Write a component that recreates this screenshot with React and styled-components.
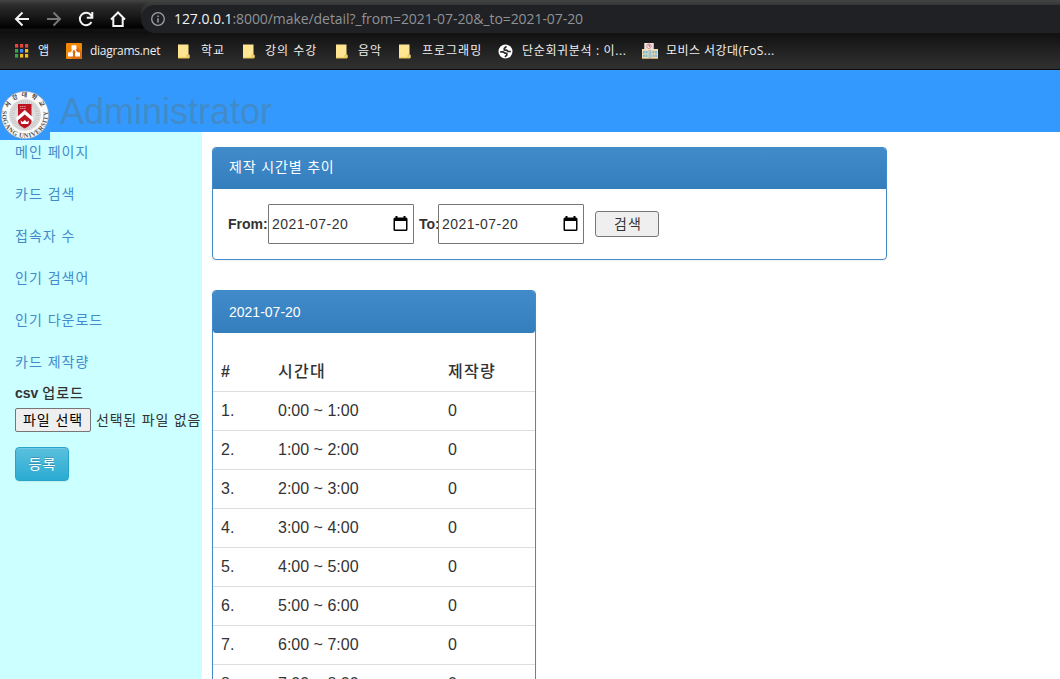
import React from 'react';
import styled, { createGlobalStyle } from 'styled-components';

const GlobalStyle = createGlobalStyle`
  *, *::before, *::after { box-sizing: border-box; }
  html, body { margin: 0; padding: 0; height: 100%; overflow: hidden; }
  body {
    font-family: "Liberation Sans", "Noto Sans CJK KR", sans-serif;
    font-size: 14px;
    line-height: 20px;
    color: #333;
    background: #fff;
  }
`;

const Screen = styled.div`
  width: 1060px;
  height: 679px;
  display: flex;
  flex-direction: column;
  overflow: hidden;
`;

const Chrome = styled.div`
  height: 70px;
  flex: none;
  display: flex;
  flex-direction: column;
  font-family: "Open Sans", "Noto Sans CJK KR", sans-serif;
  background: #2d2d2d;
  border-bottom: 1px solid #0c0c0c;
`;

const Toolbar = styled.div`
  height: 33px;
  flex: none;
  display: flex;
  align-items: flex-end;
  background: linear-gradient(#434443 0, #2c2c2c 5px, #1b1b1b 15px, #030303 27px, #000 28px, #131313 29px, #0e0e0e 33px);
`;

const NavButtons = styled.div`
  width: 141px;
  height: 28px;
  padding-left: 14px;
  display: flex;
  align-items: center;
  gap: 16px;
`;

const AddressBar = styled.div`
  flex: 1;
  height: 28px;
  padding-left: 9px;
  display: flex;
  align-items: center;
  gap: 8px;
  border-radius: 14px 0 0 14px;
  background: #202124;
  box-shadow: 0 -5px 0 rgba(70, 72, 70, 0.35);
`;

const Url = styled.span`
  font-size: 14px;
  letter-spacing: -0.07px;
  color: #8f9296;
  white-space: nowrap;
  b { font-weight: 400; color: #f1f3f4; }
`;

const BookmarkBar = styled.div`
  flex: 1;
  padding-left: 14px;
  display: flex;
  align-items: center;
  background: linear-gradient(#111 0, #1e1e1e 14px, #2e2e2e 32px, #2e2e2e 100%);
`;

const Bookmark = styled.div`
  width: ${(p) => p.$width}px;
  flex: none;
  display: flex;
  align-items: center;
  gap: ${(p) => p.$gap ?? 8}px;
  font-size: 12px;
  line-height: 18px;
  letter-spacing: ${(p) => p.$spacing ?? 1}px;
  color: #eee;
  white-space: nowrap;
  svg { flex: none; }
`;

const Header = styled.header`
  height: 62px;
  flex: none;
  display: flex;
  align-items: flex-start;
  background: #3399ff;
`;

const LogoBox = styled.div`
  position: relative;
  z-index: 1;
  width: 50px;
  height: 50px;
  margin-top: 20px;
  flex: none;
  background: #3399ff;
  svg { display: block; }
`;

const Title = styled.h1`
  margin: 22px 0 0 10px;
  font-size: 36px;
  line-height: 40px;
  font-weight: 400;
  color: #428bca;
`;

const Main = styled.div`
  flex: 1;
  min-height: 0;
  display: flex;
`;

const Sidebar = styled.nav`
  width: 202px;
  flex: none;
  padding: 0 0 0 15px;
  background: #ccffff;
`;

const NavLink = styled.a`
  display: block;
  height: 42px;
  padding-top: 10px;
  letter-spacing: 1px;
  color: #428bca;
`;

const LinkList = styled.div`
  height: 251px;
`;

const UploadLabel = styled.div`
  height: 20px;
  font-weight: 700;
  span { font-weight: 500; letter-spacing: 1px; }
`;

const FileField = styled.div`
  margin-top: 5px;
  display: flex;
  align-items: center;
  gap: 5px;
  white-space: nowrap;
  letter-spacing: 0.8px;
`;

const FileButton = styled.button`
  width: 76px;
  height: 24px;
  padding: 0;
  flex: none;
  border: 1px solid #767676;
  border-radius: 2px;
  background: #efefef;
  font: inherit;
  line-height: 20px;
  letter-spacing: 0.9px;
  color: #000;
`;

const SubmitButton = styled.button`
  display: block;
  width: 54px;
  height: 34px;
  margin-top: 15px;
  padding: 0 0 0 1px;
  border: 1px solid #28a4c9;
  border-radius: 4px;
  background: linear-gradient(#5bc0de, #2aabd2);
  box-shadow: inset 0 1px 0 rgba(255, 255, 255, 0.15), 0 1px 1px rgba(0, 0, 0, 0.075);
  font: inherit;
  letter-spacing: 1px;
  color: #fff;
  text-shadow: 0 -1px 0 rgba(0, 0, 0, 0.2);
`;

const Content = styled.main`
  flex: 1;
  padding: 15px 0 0 10px;
  display: flex;
  flex-direction: column;
  gap: 30px;
`;

const Panel = styled.section`
  width: ${(p) => p.$width}px;
  flex: none;
  border: 1px solid #428bca;
  border-radius: 4px;
  background: #fff;
  box-shadow: 0 1px 2px rgba(0, 0, 0, 0.05);
`;

const PanelHeading = styled.div`
  height: ${(p) => p.$height}px;
  padding: ${(p) => p.$top}px 16px 0;
  border-radius: ${(p) => (p.$rounded ? '3px' : '3px 3px 0 0')};
  background: linear-gradient(#428bca, #357ebd);
  color: #fff;
  letter-spacing: ${(p) => p.$spacing || 0}px;
`;

const FilterRow = styled.div`
  height: 70px;
  padding-left: 15px;
  display: flex;
  align-items: center;
`;

const FieldLabel = styled.label`
  width: ${(p) => p.$width}px;
  font-weight: 700;
`;

const DateField = styled.div`
  width: 146px;
  height: 40px;
  margin-right: 5px;
  padding: 0 5px 0 3px;
  display: flex;
  align-items: center;
  justify-content: space-between;
  border: 1px solid #767676;
  border-radius: 1px;
  letter-spacing: 0.45px;
`;

const SearchButton = styled.button`
  width: 64px;
  height: 26px;
  margin-left: 6px;
  padding: 0 0 0 2px;
  border: 1px solid #767676;
  border-radius: 3px;
  background: #efefef;
  font: inherit;
  letter-spacing: 1px;
  color: #333;
`;

const Table = styled.div`
  padding-top: 19px;
  font-size: 16px;
`;

const TableRow = styled.div`
  height: 39px;
  padding: 0 0 1px 8px;
  display: grid;
  grid-template-columns: 57px 170px 1fr;
  align-items: center;
  border-top: 1px solid ${(p) => (p.$head ? 'transparent' : '#ddd')};
  font-weight: ${(p) => (p.$head ? 700 : 400)};
  letter-spacing: ${(p) => (p.$head ? '1.3px' : '0')};
`;

const HangulHead = styled.span`
  font-weight: 500;
`;

const NavIcon = ({ d, color = '#f4f4f4' }) => (
  <svg width="16" height="16" viewBox="0 0 16 16" fill="none" stroke={color} strokeWidth="2">
    <path d={d} />
  </svg>
);

const AppsIcon = () => {
  const colors = ['#e8453c', '#e8453c', '#e8453c', '#35a552', '#4285f4', '#f5b722', '#35a552', '#f5b722', '#f5b722'];
  return (
    <svg width="15" height="16" viewBox="0 0 15 16">
      {colors.map((c, i) => (
        <rect key={i} x={1 + (i % 3) * 5} y={1 + Math.floor(i / 3) * 5} width="3.2" height="3.6" fill={c} />
      ))}
    </svg>
  );
};

const DiagramIcon = () => (
  <svg width="16" height="16" viewBox="0 0 16 16">
    <rect width="16" height="16" rx="1" fill="#f08705" />
    <path d="M10 3 16 9v7H7l-4-3z" fill="#df6c0c" />
    <path d="M8 5 4.500 11M8 5l3.500 6" stroke="#fff" strokeWidth="1.400" />
    <rect x="5.500" y="2.300" width="5" height="4.200" rx=".6" fill="#fff" />
    <rect x="2" y="9.300" width="5" height="4.200" rx=".6" fill="#fff" />
    <rect x="9" y="9.300" width="5" height="4.200" rx=".6" fill="#fff" />
  </svg>
);

const FolderIcon = () => (
  <svg width="13" height="15" viewBox="0 0 13 15">
    <path d="M1 .5h10.500v10.200H12.500V14H1z" fill="#ffe591" />
    <path d="M1 14h11v-3h-2v3" fill="none" stroke="#e5bd4d" />
  </svg>
);

const GlobeIcon = () => (
  <svg width="15" height="15" viewBox="0 0 15 15">
    <circle cx="7.500" cy="7.500" r="7" fill="#fff" />
    <path d="M2.200 7.800h2.600c1 0 1.300 1.200 2.300 1.300l1.700.3v1.700l-1.900 1.700" fill="none" stroke="#292929" strokeWidth="1.700" />
    <path d="M12.800 7.500h-2.300c-1 0-1.200-1.200-2.200-1.300l-2-.2V4.400L8.500 2.400" fill="none" stroke="#292929" strokeWidth="1.700" />
  </svg>
);

const BuildingIcon = () => (
  <svg width="16" height="16" viewBox="0 0 16 16">
    <path d="M2.500 0h9v6H16v10H0V6h2.500z" fill="#efdcae" />
    <path d="M2.500 0h9v6.500h-9z" fill="#eee3df" />
    <circle cx="7" cy="3.200" r="2.200" fill="#fff" stroke="#d4818a" />
    <path d="M7 1.500v1.800h1.300" stroke="#8a2f3c" fill="none" strokeWidth=".8" />
    <path d="M1 8h4.500v2.500H1zM1 11.500h4.500V14H1zM10.500 8H15v2.500h-4.500zM10.500 11.500H15V14h-4.500z" fill="#79b7dc" />
    <path d="M6.500 7h3v9h-3z" fill="#9fc3c9" />
    <path d="M3.200 7.500V14M12.700 8v6" stroke="#efdcae" strokeWidth=".7" />
    <path d="M0 15.500h16" stroke="#c49c6b" />
  </svg>
);

const InfoIcon = () => (
  <svg width="16" height="16" viewBox="0 0 16 16" fill="none" stroke="#9aa0a6">
    <circle cx="8" cy="8" r="6.300" strokeWidth="1.300" />
    <path d="M8 7.200v4.200M8 4.400v1.500" strokeWidth="1.500" />
  </svg>
);

const CalendarIcon = () => (
  <svg width="15" height="16" viewBox="0 0 15 16">
    <path d="M2.500 0h2v1.500h6V0h2v1.500H13a1.500 1.500 0 0 1 1.500 1.500v10.500A1.500 1.500 0 0 1 13 15H2a1.500 1.500 0 0 1-1.500-1.500V3A1.500 1.500 0 0 1 2 1.500h.5zM2 5v8.500h11V5z" fill="#000" />
  </svg>
);

const Emblem = () => (
  <svg width="50" height="50" viewBox="0 0 50 50">
    <defs>
      <path id="arc-top" d="M7 25a18 18 0 0 1 36 0" />
      <path id="arc-bottom" d="M5 14A22.800 22.800 0 1 0 45 14" />
    </defs>
    <circle cx="25" cy="25" r="23.700" fill="#fafafa" stroke="#8d9daf" strokeWidth=".6" />
    <circle cx="25" cy="25" r="15.500" fill="#dedede" stroke="#c8c8c8" strokeWidth=".5" />
    <circle cx="25" cy="25" r="12.500" fill="none" stroke="#bbb" strokeWidth="4" strokeDasharray=".6 1.300" />
    <text fontFamily="Noto Sans CJK KR, sans-serif" fontSize="6" fontWeight="700" fill="#3c3c3c" textAnchor="middle" letterSpacing="3.400">
      <textPath href="#arc-top" startOffset="52%">서강대학교</textPath>
    </text>
    <text fontFamily="Liberation Serif, serif" fontSize="6.600" fontWeight="700" fill="#555" textAnchor="middle" letterSpacing=".5">
      <textPath href="#arc-bottom" startOffset="50%">SOGANG UNIVERSITY</textPath>
    </text>
    <path d="M18 14h13.500v17c0 4-3.300 5.300-6.700 7.500-3.500-2.200-6.800-3.500-6.800-7.500z" fill="#bd1421" />
    <path d="M16.500 27.500 24.800 20l8.200 7.500v4L24.800 24.500l-8.300 7z" fill="#fff" />
    <path d="m20.500 30.500 2.200 1.500 2.100-2 2.100 2 2.200-1.500-.8 3.500h-7z" fill="#fff" />
    <path d="M20 16.500h6M20 18.500h6" stroke="#e79aa0" strokeWidth=".9" strokeDasharray="1.500 .6" />
  </svg>
);

const links = ['메인 페이지', '카드 검색', '접속자 수', '인기 검색어', '인기 다운로드', '카드 제작량'];
const hours = Array.from({ length: 8 }, (_, i) => i);

export default function App() {
  return (
    <Screen>
      <GlobalStyle />
      <Chrome>
        <Toolbar>
          <NavButtons>
            <NavIcon d="M15 8H2M8.500 1.500 2 8l6.500 6.500" />
            <NavIcon d="M1 8h13M7.500 1.500 14 8l-6.500 6.500" color="#777" />
            <NavIcon d="M13.500 11A6.200 6.200 0 1 1 13 4.200L14 6M14.300 1v5.700H8.800" />
            <NavIcon d="M1 8.500 8 1.500l7 7M3.300 7v8h9.400V7" />
          </NavButtons>
          <AddressBar>
            <InfoIcon />
            <Url><b>127.0.0.1</b>:8000/make/detail?_from=2021-07-20&amp;_to=2021-07-20</Url>
          </AddressBar>
        </Toolbar>
        <BookmarkBar>
          <Bookmark $width={52} $gap={9}><AppsIcon /><span>앱</span></Bookmark>
          <Bookmark $width={111} $spacing={-0.28}><DiagramIcon /><span>diagrams.net</span></Bookmark>
          <Bookmark $width={65} $gap={11}><FolderIcon /><span>학교</span></Bookmark>
          <Bookmark $width={93} $gap={10}><FolderIcon /><span>강의 수강</span></Bookmark>
          <Bookmark $width={63} $gap={10}><FolderIcon /><span>음악</span></Bookmark>
          <Bookmark $width={100} $gap={11}><FolderIcon /><span>프로그래밍</span></Bookmark>
          <Bookmark $width={144} $gap={9} $spacing={0.65}><GlobeIcon /><span>단순회귀분석 : 이...</span></Bookmark>
          <Bookmark $width={150} $spacing={0.45}><BuildingIcon /><span>모비스 서강대(FoS...</span></Bookmark>
        </BookmarkBar>
      </Chrome>
      <Header>
        <LogoBox><Emblem /></LogoBox>
        <Title>Administrator</Title>
      </Header>
      <Main>
        <Sidebar>
          <LinkList>
            {links.map((label) => <NavLink key={label}>{label}</NavLink>)}
          </LinkList>
          <UploadLabel>csv <span>업로드</span></UploadLabel>
          <FileField>
            <FileButton>파일 선택</FileButton>
            <span>선택된 파일 없음</span>
          </FileField>
          <SubmitButton>등록</SubmitButton>
        </Sidebar>
        <Content>
          <Panel $width={675}>
            <PanelHeading $height={41} $top={9} $spacing={0.85}>제작 시간별 추이</PanelHeading>
            <FilterRow>
              <FieldLabel $width={40}>From:</FieldLabel>
              <DateField>2021-07-20<CalendarIcon /></DateField>
              <FieldLabel $width={19}>To:</FieldLabel>
              <DateField>2021-07-20<CalendarIcon /></DateField>
              <SearchButton>검색</SearchButton>
            </FilterRow>
          </Panel>
          <Panel $width={324}>
            <PanelHeading $height={42} $top={11} $rounded>2021-07-20</PanelHeading>
            <Table>
              <TableRow $head>
                <span>#</span>
                <HangulHead>시간대</HangulHead>
                <HangulHead>제작량</HangulHead>
              </TableRow>
              {hours.map((h) => (
                <TableRow key={h}>
                  <span>{h + 1}.</span>
                  <span>{h}:00 ~ {h + 1}:00</span>
                  <span>0</span>
                </TableRow>
              ))}
            </Table>
          </Panel>
        </Content>
      </Main>
    </Screen>
  );
}
